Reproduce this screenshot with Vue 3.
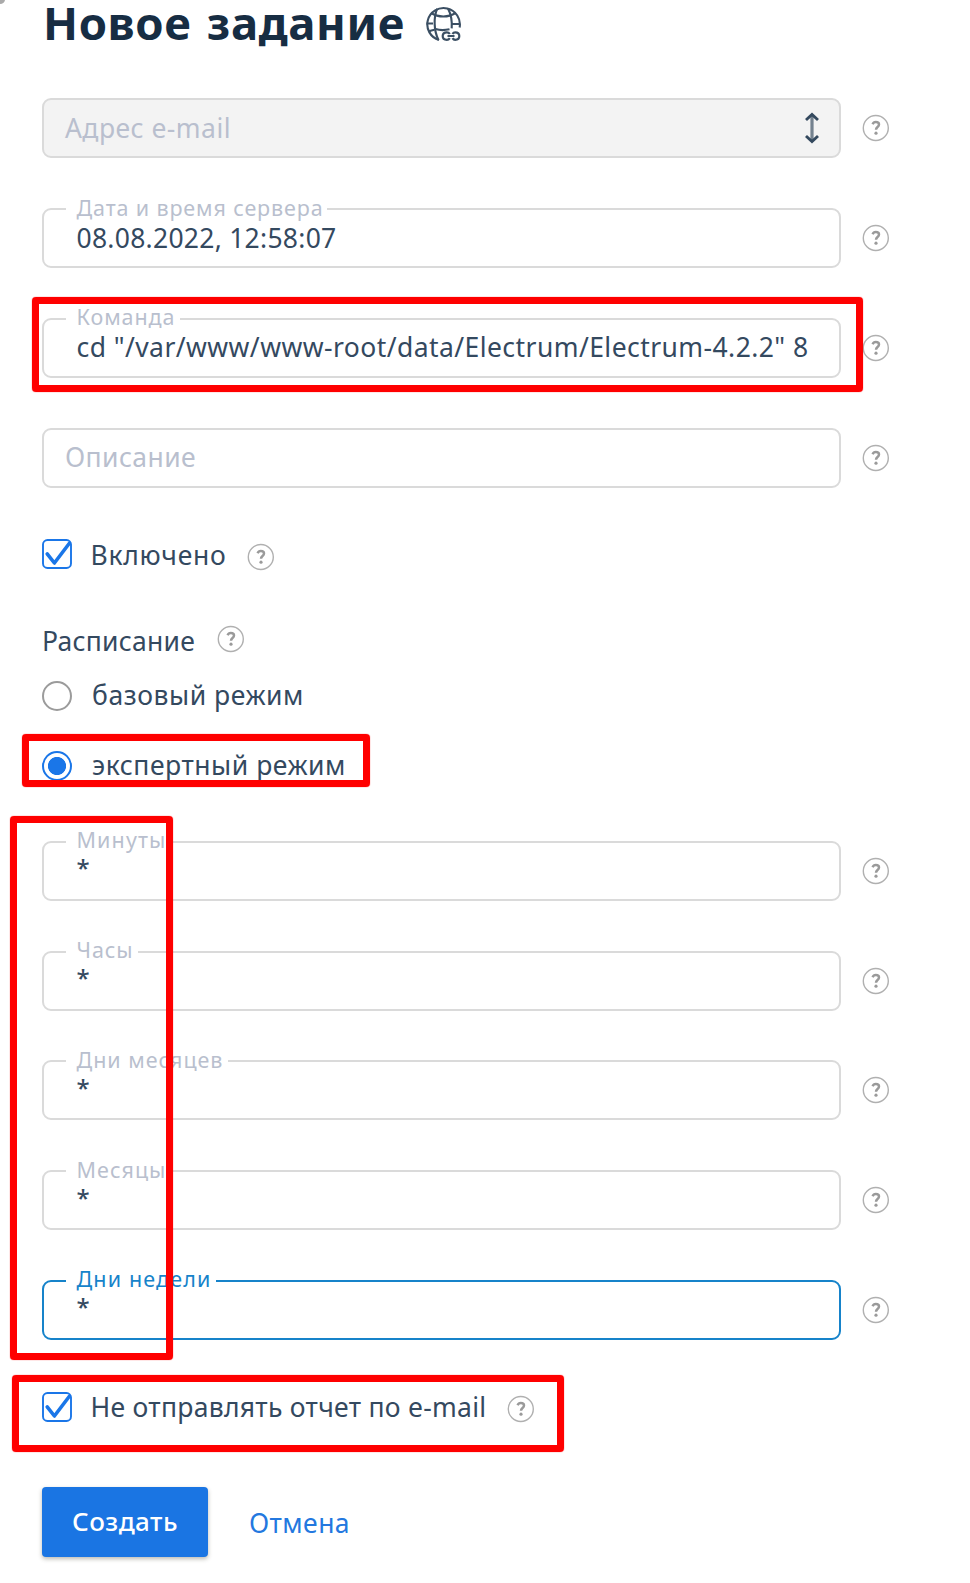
<script setup>
import { h } from 'vue'

const mainFields = [
  { kind: 'select', text: 'Адрес e-mail', w: 166 },
  { kind: 'value', label: 'Дата и время сервера', lw: 247, text: '08.08.2022, 12:58:07', w: 260 },
  { kind: 'value', label: 'Команда', lw: 99, text: 'cd "/var/www/www-root/data/Electrum/Electrum-4.2.2" 8', w: 732 },
  { kind: 'empty', text: 'Описание', w: 131 },
]
const cronFields = [
  { label: 'Минуты', lw: 90 },
  { label: 'Часы', lw: 57 },
  { label: 'Дни месяцев', lw: 147 },
  { label: 'Месяцы', lw: 90 },
  { label: 'Дни недели', lw: 135, active: true },
]

// Spreads letters evenly so that a caption takes the given width.
const vFit = {
  mounted(el, { value }) {
    const n = el.textContent.length
    const width = el.getBoundingClientRect().width
    el.style.letterSpacing = `${(value - width) / n}px`
  },
}

const HelpIcon = () =>
  h('svg', { width: 28, height: 28, viewBox: '0 0 28 28', fill: 'none' }, [
    h('circle', { cx: 13.8, cy: 14, r: 12.5, stroke: '#b0b0b0', 'stroke-width': 1.4 }),
    h('path', {
      d: 'M10.6 10.2c.6-1.500 1.700-2.200 3.200-2.200 1.900 0 3.200.9 3.200 2.500 0 2.600-3 2.400-3 5.200',
      stroke: '#9a9a9a',
      'stroke-width': 2.5,
    }),
    h('circle', { cx: 14, cy: 19.2, r: 1.6, fill: '#9a9a9a' }),
  ])

const CheckIcon = () =>
  h('svg', { width: 30, height: 30, viewBox: '0 0 30 30', fill: 'none' }, [
    h('rect', { x: 1, y: 1, width: 28, height: 28, rx: 4.5, stroke: '#1a76e8', 'stroke-width': 1.9, fill: '#fff' }),
    h('path', { d: 'M5.200 14.800l7.200 9.200L27.200 4.500', stroke: '#1a76e8', 'stroke-width': 3.6, 'stroke-linecap': 'round', 'stroke-linejoin': 'round' }),
  ])
</script>

<template>
  <main class="page">
    <header class="head">
      <h1><span v-fit="362">Новое задание</span></h1>
      <svg class="globe" width="36" height="36" viewBox="0 0 36 36" fill="none" stroke="#3b4f63" stroke-width="2.1">
        <path d="M14 34A16.3 16.3 0 1 1 34.600 21.500" />
        <path d="M12.200 2.600C8.600 11 8.600 24.500 13.500 34" />
        <path d="M23 2.400c2.800 5.300 4.200 12.600 3.700 20" />
        <path d="M6 7c7.500 4.600 17.300 4.600 24.500 0" />
        <path d="M1.500 17.500h6.500M10.500 23c4 1.300 9 1.400 14 .3M27 18h7.500" />
        <path d="M3.500 25.500c2.200-1 4.200-1.500 6-1.800" />
        <path d="M24.800 28c-.8-1.300-1.600-1.700-3-1.700-2.400 0-4.100 1.500-4.100 3.700s1.700 3.800 4.100 3.800c1.400 0 2.200-.5 3-1.700M27.500 28c.7-1.300 1.500-1.700 2.700-1.700 2.500 0 4.100 1.500 4.100 3.700s-1.600 3.800-4.100 3.800c-1.200 0-2-.5-2.700-1.700M22.500 30h7" stroke-width="2.200" />
      </svg>
    </header>

    <section class="fields">
      <div v-for="f in mainFields" :key="f.text" class="row">
        <div class="field" :class="f.kind">
          <div v-if="f.label" class="legend"><span v-fit="f.lw">{{ f.label }}</span></div>
          <span v-fit="f.w">{{ f.text }}</span>
          <svg v-if="f.kind === 'select'" class="arrows" width="16" height="34" viewBox="0 0 16 34" fill="none">
            <path d="M8 4v26" stroke="#74828f" stroke-width="3.200" />
            <path d="M2 9L8 3.500 14 9M2 25l6 5.500 6-5.500" stroke="#34495e" stroke-width="2.900" />
          </svg>
        </div>
        <HelpIcon class="row-help" />
      </div>
    </section>

    <div class="check enabled">
      <CheckIcon />
      <span v-fit="136" class="caption">Включено</span>
      <HelpIcon class="help-low" />
    </div>

    <div class="schedule">
      <span v-fit="153">Расписание</span>
      <HelpIcon class="help-high" />
    </div>
    <div class="radio">
      <i class="dot"></i>
      <span v-fit="212">базовый режим</span>
    </div>
    <div class="radio">
      <i class="dot on"></i>
      <span v-fit="254">экспертный режим</span>
    </div>

    <section class="fields cron">
      <div v-for="f in cronFields" :key="f.label" class="row">
        <div class="field value" :class="{ active: f.active }">
          <div class="legend"><span v-fit="f.lw">{{ f.label }}</span></div>
          <span class="star">*</span>
        </div>
        <HelpIcon class="row-help" />
      </div>
    </section>

    <div class="check report">
      <CheckIcon />
      <span v-fit="396" class="caption">Не отправлять отчет по e-mail</span>
      <HelpIcon class="help-low" />
    </div>

    <footer class="actions">
      <button type="button"><span v-fit="106">Создать</span></button>
      <a><span v-fit="101">Отмена</span></a>
    </footer>

    <i class="corner"></i>
    <i class="mark mark-command"></i>
    <i class="mark mark-mode"></i>
    <i class="mark mark-cron"></i>
    <i class="mark mark-report"></i>
  </main>
</template>

<style>
body {
  margin: 0;
  background: #fff;
}
</style>

<style scoped>
.page {
  position: relative;
  box-sizing: border-box;
  width: 970px;
  height: 1583px;
  padding-left: 42px;
  overflow: hidden;
  background: #fff;
  color: #34495f;
  font: 26.5px/30px "Noto Sans", "Open Sans", sans-serif;
  white-space: pre;
}
svg {
  display: block;
  flex: none;
}
.head {
  display: flex;
  height: 98.2px;
}
h1 {
  width: 383px;
  margin: 0;
  padding-left: 1px;
  box-sizing: border-box;
  color: #172d43;
  font-size: 45.5px;
  line-height: 45px;
  font-weight: 700;
}
h1 span {
  display: inline-block;
  word-spacing: 3px;
}
.globe {
  margin-top: 6px;
}
.fields {
  display: flex;
  flex-direction: column;
  gap: 49.9px;
}
.row {
  display: flex;
  align-items: center;
  height: 60px;
}
.field {
  position: relative;
  display: flex;
  align-items: center;
  box-sizing: border-box;
  width: 798.5px;
  height: 60px;
  padding: 0 18.5px 1px 21px;
  border: 2px solid #dadada;
  border-radius: 9px;
}
.select {
  justify-content: space-between;
  background: #f3f3f3;
}
.select,
.empty {
  color: #b9bfce;
}
.value {
  padding-left: 32.5px;
}
.legend {
  position: absolute;
  top: -16.5px;
  left: 22px;
  padding: 0 4px 0 10.5px;
  background: #fff;
  color: #b9bfce;
  font-size: 21.5px;
  line-height: 28px;
}
.active {
  border-color: #1683ca;
}
.active .legend {
  color: #1683ca;
}
.star {
  margin-top: -4px;
  font-size: 24px;
  font-weight: 500;
}
.row-help {
  margin-left: 21px;
}
.check {
  display: flex;
  align-items: center;
  height: 30px;
}
.enabled {
  margin-top: 51.4px;
}
.caption {
  margin: 1px 0 0 18.5px;
}
.help-low {
  margin: 5px 0 0 20.5px;
}
.schedule {
  display: flex;
  align-items: center;
  height: 30px;
  margin-top: 57px;
  margin-bottom: 25px;
}
.help-high {
  margin: -5px 0 0 22px;
}
.radio {
  display: flex;
  align-items: center;
  height: 30px;
  margin-bottom: 40px;
}
.radio span {
  margin: -2px 0 0 20px;
}
.dot {
  position: relative;
  box-sizing: border-box;
  width: 30px;
  height: 30px;
  border: 2px solid #9b9b9b;
  border-radius: 50%;
}
.on {
  border-color: #1a76e8;
  background: radial-gradient(circle, #1a76e8 8.700px, #fff 9.400px);
}
.cron {
  margin-top: 59.5px;
  gap: 49.75px;
}
.report {
  margin-top: 52px;
}
.actions {
  display: flex;
  align-items: center;
  margin-top: 65.500px;
}
button {
  width: 166px;
  height: 70px;
  padding: 0;
  border: 0;
  border-radius: 4px;
  background: #1a75e3;
  box-shadow: 0 2px 4px rgba(60, 60, 40, 0.35);
  color: #fff;
  font: 500 26px/66px "Noto Sans", sans-serif;
}
button span {
  position: relative;
  top: -1px;
}
.actions a {
  margin: 2px 0 0 41px;
  color: #2378df;
}
.corner {
  position: absolute;
  top: -5px;
  left: -5px;
  width: 10px;
  height: 9px;
  border-radius: 50%;
  background: #aaa;
}
.mark {
  position: absolute;
  box-sizing: border-box;
  border: 7.500px solid #f00;
  border-radius: 4px;
  box-shadow: 0 0 1px #f00;
}
.mark-command {
  left: 32px;
  top: 297px;
  width: 831px;
  height: 95px;
}
.mark-mode {
  left: 22px;
  top: 734px;
  width: 348px;
  height: 53px;
}
.mark-cron {
  left: 10px;
  top: 816px;
  width: 163px;
  height: 544px;
}
.mark-report {
  left: 12px;
  top: 1375px;
  width: 552px;
  height: 77px;
}
</style>
